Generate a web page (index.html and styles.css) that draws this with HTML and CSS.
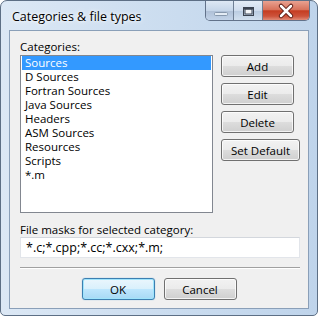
FILE: index.html
```html
<!DOCTYPE html>
<html>
<head>
<meta charset="utf-8">
<link rel="stylesheet" href="styles.css">
</head>
<body>
<div class="window">
  <div class="titlebar">
    <span class="title">Categories &amp; file types</span>
    <div class="caption">
      <div class="cap cap-min">
        <svg width="27" height="19" viewBox="0 0 27 19"><rect x="8.5" y="11.5" width="13" height="3" rx="1" fill="#e4ecf5" stroke="#8798ad"/></svg>
      </div>
      <div class="cap cap-max">
        <svg width="28" height="19" viewBox="0 0 28 19"><rect x="9.5" y="6.5" width="10" height="8" fill="none" stroke="#3b4350"/><rect x="11" y="8" width="7" height="5" fill="#f4f6f9" stroke="#3b4350" stroke-width="1"/><rect x="10" y="7" width="9" height="1.5" fill="#3b4350"/></svg>
      </div>
      <div class="cap cap-close">
        <svg width="46" height="19" viewBox="0 0 46 19"><path d="M18 5 L28 15 M28 5 L18 15" stroke="#5a1a12" stroke-width="4.5" stroke-linecap="round"/><path d="M18 5 L28 15 M28 5 L18 15" stroke="#ffffff" stroke-width="2.5" stroke-linecap="round"/></svg>
      </div>
    </div>
  </div>
  <div class="client">
    <div class="label">Categories:</div>
    <div class="main">
      <ul class="list">
        <li class="selected">Sources</li>
        <li>D Sources</li>
        <li>Fortran Sources</li>
        <li>Java Sources</li>
        <li>Headers</li>
        <li>ASM Sources</li>
        <li>Resources</li>
        <li>Scripts</li>
        <li>*.m</li>
      </ul>
      <div class="side">
        <button class="btn">Add</button>
        <button class="btn">Edit</button>
        <button class="btn">Delete</button>
        <button class="btn btn-wide">Set Default</button>
      </div>
    </div>
    <div class="label label-masks">File masks for selected category:</div>
    <div class="input">*.c;*.cpp;*.cc;*.cxx;*.m;</div>
    <div class="separator"></div>
    <div class="footer">
      <button class="btn btn-default">OK</button>
      <button class="btn">Cancel</button>
    </div>
  </div>
</div>
</body>
</html>
```
FILE: styles.css
```css
html, body {
  margin: 0;
  padding: 0;
  background: #ffffff;
}
body {
  font-family: "Open Sans", "Noto Sans", sans-serif;
  font-size: 11.5px;
  color: #000;
}
.window {
  box-sizing: border-box;
  width: 318px;
  height: 316px;
  border: 1px solid #5d6f85;
  border-radius: 7px 7px 5px 5px;
  background: linear-gradient(to right, #dce8f5 0%, #cddef0 45%, #bfd4eb 100%);
  display: flex;
  flex-direction: column;
  padding: 0 8px 6px 8px;
}
.titlebar {
  height: 29px;
  flex: none;
  display: flex;
  justify-content: space-between;
  align-items: flex-start;
  margin-right: -1px;
}
.title {
  font-size: 12.5px;
  padding-top: 7px;
  padding-left: 3px;
  color: #000;
  text-shadow: 0 0 6px #fff, 0 0 3px #fff;
}
.caption {
  display: flex;
  height: 19px;
  border: 1px solid #62728a;
  border-top: none;
  border-radius: 0 0 5px 5px;
  overflow: hidden;
}
.cap {
  height: 19px;
}
.cap-min {
  width: 27px;
  border-right: 1px solid #6f7f94;
  background: linear-gradient(#dde8f4 0%, #c6d6e9 50%, #aebfd6 51%, #c2d3e8 100%);
}
.cap-max {
  width: 28px;
  border-right: 1px solid #6f7f94;
  background: linear-gradient(#e3ecf6 0%, #cfdced 50%, #b9cbe1 51%, #d2e0ef 100%);
}
.cap-close {
  width: 46px;
  background: linear-gradient(#e9a291 0%, #d8735c 45%, #c53d22 52%, #cd533b 80%, #e08b77 100%);
}
.cap svg {
  display: block;
}
.client {
  flex: 1;
  border: 1px solid #8a9fb8;
  background: #f0f0f0;
  padding: 9px 8px 0 10px;
  display: flex;
  flex-direction: column;
}
.label {
  height: 14px;
  line-height: 14px;
  white-space: nowrap;
}
.main {
  display: flex;
  gap: 8px;
  align-items: flex-start;
  margin-top: 1px;
}
.list {
  box-sizing: border-box;
  width: 193px;
  height: 158px;
  margin: 0;
  padding: 0 1px;
  list-style: none;
  background: #fff;
  border: 1px solid #828790;
}
.list li {
  height: 14px;
  line-height: 14px;
  padding-left: 3px;
  white-space: nowrap;
}
.list li.selected {
  background: #3399ff;
  color: #fff;
}
.side {
  display: flex;
  flex-direction: column;
  align-items: flex-start;
  gap: 6px;
}
.btn {
  box-sizing: border-box;
  width: 73px;
  height: 22px;
  padding: 0;
  font-family: inherit;
  font-size: 11.5px;
  color: #000;
  border: 1px solid #707070;
  border-radius: 3px;
  background: linear-gradient(#f2f2f2 0%, #ebebeb 50%, #dddddd 51%, #cfcfcf 100%);
  box-shadow: inset 0 0 0 1px rgba(255,255,255,0.75);
}
.btn-wide {
  width: 79px;
}
.label-masks {
  margin-top: 10px;
}
.input {
  box-sizing: border-box;
  height: 21px;
  margin-top: 0;
  background: #fff;
  border: 1px solid #e2e5ea;
  border-top-color: #d3d7dd;
  padding-left: 5px;
  font-size: 12.5px;
  line-height: 19px;
  white-space: nowrap;
}
.separator {
  margin-top: 9px;
  height: 1px;
  border-top: 1px solid #a0a0a0;
  background: #ffffff;
}
.footer {
  margin-top: 9px;
  display: flex;
  justify-content: center;
  gap: 9px;
  padding-right: 2px;
}
.btn-default {
  border-color: #3c7fb1;
  background: linear-gradient(#eaf6fd 0%, #d9f0fc 50%, #bee6fd 51%, #a7d9f5 100%);
  box-shadow: inset 0 0 0 1px #9fe4fc, 0 0 1px #5fa0d0;
}
```
